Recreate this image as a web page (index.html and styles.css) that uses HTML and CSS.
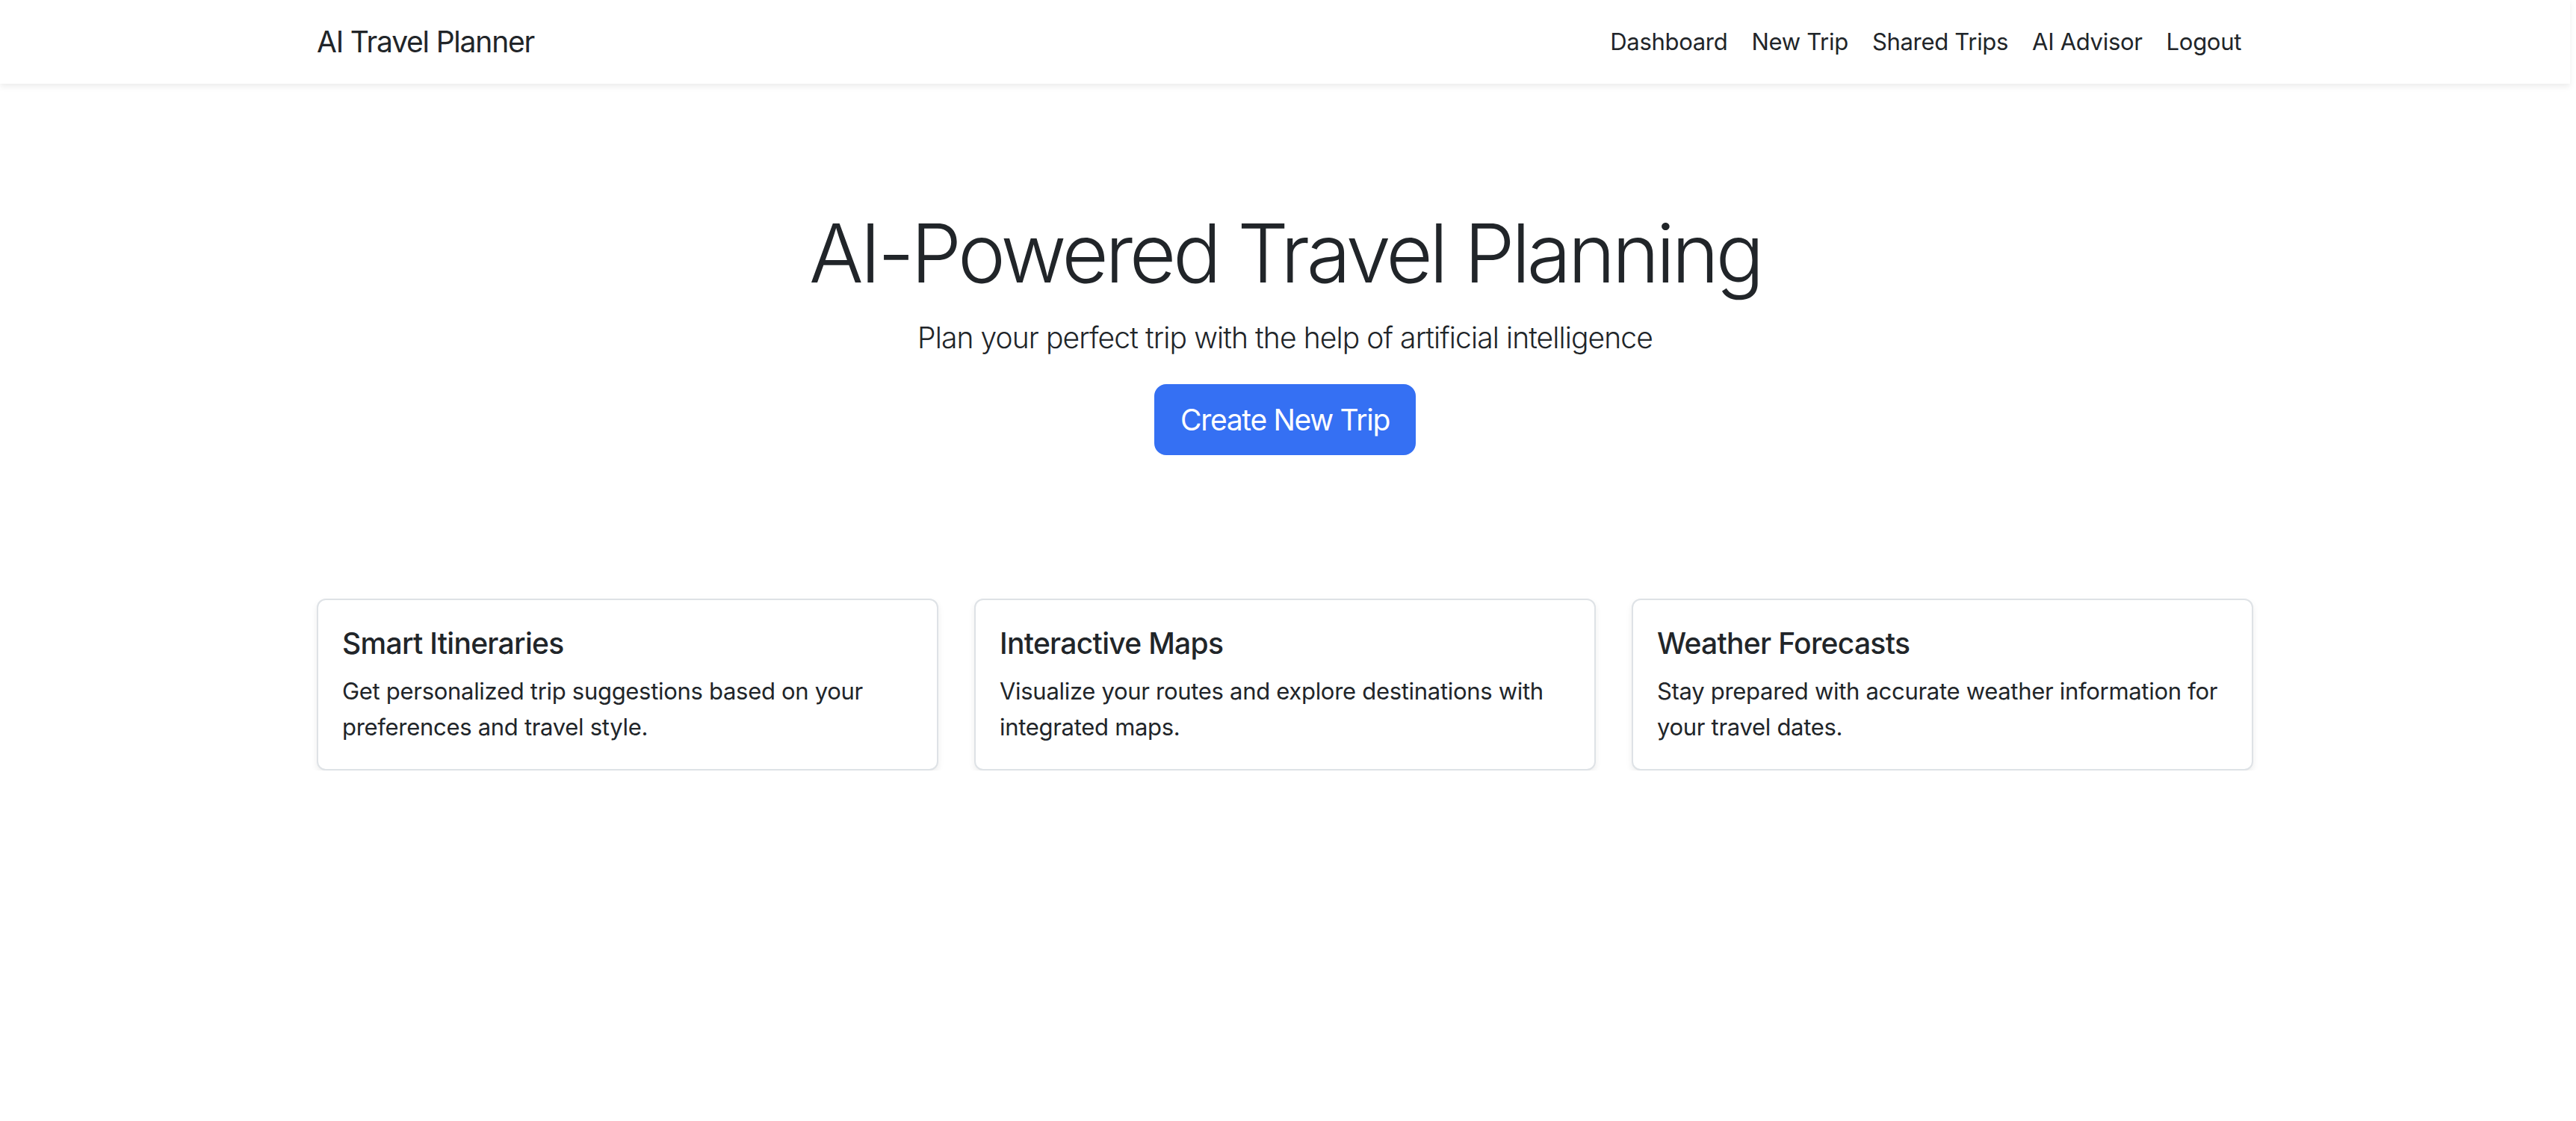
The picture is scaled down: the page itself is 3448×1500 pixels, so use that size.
FILE: index.html
```html
<!DOCTYPE html>
<html lang="en">
<head>
<meta charset="utf-8">
<title>AI Travel Planner</title>
<link rel="stylesheet" href="styles.css">
</head>
<body>
<nav class="navbar">
  <div class="container nav-inner">
    <a class="brand" href="#">AI Travel Planner</a>
    <ul class="nav-links">
      <li><a href="#">Dashboard</a></li>
      <li><a href="#">New Trip</a></li>
      <li><a href="#">Shared Trips</a></li>
      <li><a href="#">AI Advisor</a></li>
      <li><a href="#">Logout</a></li>
    </ul>
  </div>
</nav>
<main class="container">
  <section class="hero">
    <h1 class="hero-title">AI-Powered Travel Planning</h1>
    <p class="lead">Plan your perfect trip with the help of artificial intelligence</p>
    <a class="btn-primary" href="#">Create New Trip</a>
  </section>
  <section class="features">
    <div class="card">
      <h5 class="card-title">Smart Itineraries</h5>
      <p class="card-text">Get personalized trip suggestions based on your preferences and travel style.</p>
    </div>
    <div class="card">
      <h5 class="card-title">Interactive Maps</h5>
      <p class="card-text">Visualize your routes and explore destinations with integrated maps.</p>
    </div>
    <div class="card">
      <h5 class="card-title">Weather Forecasts</h5>
      <p class="card-text">Stay prepared with accurate weather information for your travel dates.</p>
    </div>
  </section>
</main>
</body>
</html>
```

FILE: styles.css
```css
* { box-sizing: border-box; }

html, body { background: #fff; }

body {
  margin: 0;
  padding-right: 8px;
  font-family: "Inter", "Liberation Sans", sans-serif;
  font-size: 31px;
  letter-spacing: -0.3px;
  line-height: 1.5;
  color: #212529;
}

.container {
  width: 2640px;
  margin: 0 auto;
  padding: 0 24px;
}

.navbar {
  background: #fff;
  height: 112px;
  padding: 16px 0;
  box-shadow: 0 4px 8px rgba(0, 0, 0, 0.075);
}

.nav-inner {
  display: flex;
  align-items: center;
  justify-content: space-between;
  height: 80px;
}

.brand {
  font-size: 39px;
  letter-spacing: -1.2px;
  line-height: 60px;
  padding: 10px 0;
  color: #212529;
  text-decoration: none;
}

.nav-links {
  display: flex;
  list-style: none;
  margin: 0;
  padding: 0;
}

.nav-links a {
  display: block;
  padding: 16px 16px;
  color: #212529;
  text-decoration: none;
  line-height: 48px;
}

.hero {
  text-align: center;
  padding-top: 162px;
  padding-bottom: 96px;
}

.hero-title {
  font-size: 108px;
  font-weight: 300;
  letter-spacing: -4.5px;
  line-height: 130px;
  margin: 0 0 18px;
}

.lead {
  font-size: 39px;
  font-weight: 300;
  letter-spacing: -0.9px;
  line-height: 60px;
  margin: 0 0 32px;
}

.btn-primary {
  display: inline-block;
  background: #3570f3;
  color: #fff;
  text-decoration: none;
  font-size: 39px;
  letter-spacing: -1.3px;
  line-height: 59px;
  padding: 16px 33px;
  border: 2px solid #3570f3;
  border-radius: 16px;
}

.features {
  display: grid;
  grid-template-columns: repeat(3, 1fr);
  gap: 48px;
  margin-top: 96px;
}

.card {
  border: 2px solid #dee2e6;
  border-radius: 12px;
  padding: 34px 32px 32px;
  background: #fff;
  box-shadow: 0 4px 8px rgba(0, 0, 0, 0.075);
}

.card-title {
  font-size: 39px;
  font-weight: 500;
  letter-spacing: -0.7px;
  line-height: 48px;
  margin: 0 0 16px;
}

.card-text {
  margin: 0;
  line-height: 48px;
}
```
